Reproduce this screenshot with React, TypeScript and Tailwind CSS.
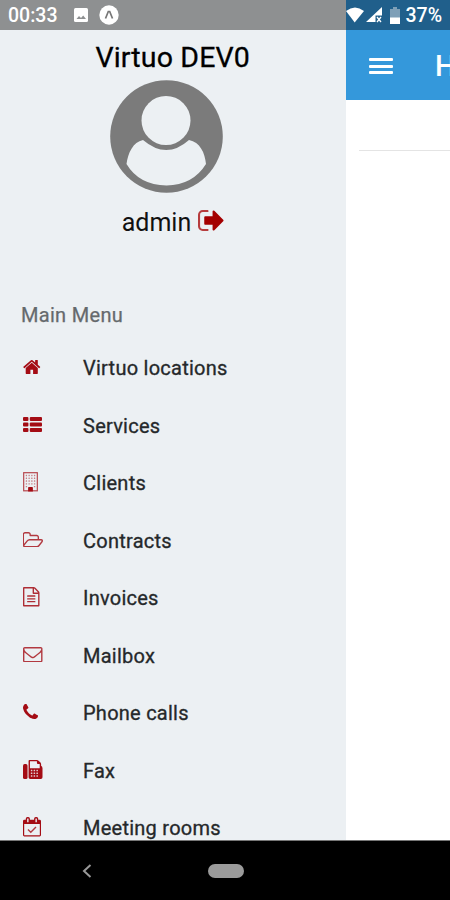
import type { ReactNode } from "react";

type MenuItem = { label: string; icon: ReactNode };

const HomeIcon = () => (
  <svg className="h-[14px] w-[17.5px]" viewBox="64 253 1664 1283" preserveAspectRatio="none" fill="currentColor">
    <path d="M1472 992v480q0 26-19 45t-45 19h-384v-384h-256v384h-384q-26 0-45-19t-19-45v-480q0-1 .5-3t.5-3l575-474 575 474q1 2 1 6zm223-69l-62 74q-8 9-21 11h-3q-13 0-21-7l-692-577-692 577q-12 8-24 7-13-2-21-11l-62-74q-8-10-7-23.5t11-21.5l719-599q32-26 76-26t76 26l244 204v-195q0-14 9-23t23-9h192q14 0 23 9t9 23v408l219 182q10 8 11 21.5t-7 23.5z" />
  </svg>
);

const ListIcon = () => (
  <svg className="h-[15px] w-[19px]" viewBox="0 0 1792 1408" preserveAspectRatio="none" fill="currentColor">
    {[0, 512, 1024].map((y) => (
      <g key={y}>
        <rect x="0" y={y} width="512" height="384" rx="96" />
        <rect x="640" y={y} width="1152" height="384" rx="96" />
      </g>
    ))}
  </svg>
);

const BuildingIcon = () => (
  <svg className="h-[19.5px] w-[15px]" viewBox="0 0 1408 1792" preserveAspectRatio="none">
    <rect x="64" y="64" width="1280" height="1664" fill="none" stroke="currentColor" strokeWidth="110" opacity="0.75" />
    <g fill="currentColor">
      {[256, 512, 768, 1024].map((y) =>
        [256, 512, 768, 1024].map((x) => (
          <rect key={`${x}-${y}`} x={x} y={y} width="128" height="128" rx="32" opacity="0.5" />
        )),
      )}
      <rect x="256" y="1280" width="128" height="128" rx="32" opacity="0.5" />
      <rect x="1024" y="1280" width="128" height="128" rx="32" opacity="0.5" />
      <path d="M480 1792v-352q0-64 64-64h320q64 0 64 64v352z" />
    </g>
  </svg>
);

const FolderIcon = () => (
  <svg className="h-[15.5px] w-[20px] opacity-80" viewBox="96 128 1877 1408" preserveAspectRatio="none" fill="currentColor">
    <path d="M1845 931q0-35-53-35h-1088q-40 0-85.5 21.5t-71.5 52.5l-294 363q-18 24-18 40 0 35 53 35h1088q40 0 86-22t71-53l294-363q18-22 18-39zm-1141-163h768v-160q0-40-28-68t-68-28h-576q-40 0-68-28t-28-68v-64q0-40-28-68t-68-28h-320q-40 0-68 28t-28 68v853l256-315q44-53 116-87.5t140-34.5zm1269 163q0 62-46 120l-295 363q-43 53-116 87.5t-140 34.5h-1088q-92 0-158-66t-66-158v-960q0-92 66-158t158-66h320q92 0 158 66t66 158v32h544q92 0 158 66t66 158v160h192q54 0 99 24.5t67 70.5q15 32 15 68z" />
  </svg>
);

const FileIcon = () => (
  <svg className="h-[19.5px] w-[16.5px] opacity-85" viewBox="128 0 1536 1792" preserveAspectRatio="none" fill="currentColor">
    <path d="M1596 380q28 28 48 76t20 88v1152q0 40-28 68t-68 28h-1344q-40 0-68-28t-28-68v-1600q0-40 28-68t68-28h896q40 0 88 20t76 48zm-444-244v376h376q-10-29-22-41l-313-313q-12-12-41-22zm384 1528v-1024h-416q-40 0-68-28t-28-68v-416h-768v1536h1280z" />
    <rect x="512" y="768" width="768" height="128" rx="32" />
    <rect x="512" y="1024" width="768" height="128" rx="32" />
    <rect x="512" y="1280" width="768" height="128" rx="32" />
  </svg>
);

const MailIcon = () => (
  <svg className="h-[15.5px] w-[19.5px] opacity-80" viewBox="0 256 1792 1408" preserveAspectRatio="none" fill="currentColor">
    <path d="M1664 1504v-768q-32 36-69 66-268 206-426 338-51 43-83 67t-86.5 48.5-102.5 24.5h-2q-48 0-102.5-24.5t-86.5-48.5-83-67q-158-132-426-338-37-30-69-66v768q0 13 9.5 22.5t22.5 9.5h1472q13 0 22.5-9.5t9.5-22.5zm0-1051v-24.5l-.5-13-3-12.5-5.5-9-9-7.5-14-2.5h-1472q-13 0-22.5 9.5t-9.5 22.5q0 168 147 284 193 152 401 317 6 5 35 29.5t46 37.5 44.5 31.5 50.5 27.5 43 9h2q20 0 43-9t50.5-27.5 44.5-31.5 46-37.5 35-29.5q208-165 401-317 54-43 100.5-115.5t46.5-131.5zm128-37v1088q0 66-47 113t-113 47h-1472q-66 0-113-47t-47-113v-1088q0-66 47-113t113-47h1472q66 0 113 47t47 113z" />
  </svg>
);

const PhoneIcon = () => (
  <svg className="-mt-px h-[15px] w-[15px]" viewBox="192 128 1408 1408" fill="currentColor">
    <path d="M1600 1240q0 27-10 70.5t-21 68.5q-21 50-122 106-94 51-186 51-27 0-53-3.5t-57.5-12.5-47-14.5-55.5-20.5-49-18q-98-35-175-83-127-79-264-216t-216-264q-48-77-83-175-3-9-18-49t-20.5-55.5-14.5-47-12.5-57.5-3.5-53q0-92 51-186 56-101 106-122 25-11 68.5-21t70.5-10q14 0 21 3 18 6 53 76 11 19 30 54t35 63.5 31 53.5q3 4 17.5 25t21.5 35.5 7 28.5q0 20-28.5 50t-62 55-62 53-28.5 46q0 9 5 22.5t8.5 20.5 14 24 11.5 19q76 137 174 235t235 174q2 1 19 11.5t24 14 20.5 8.5 22.5 5q18 0 46-28.5t53-62 55-62 50-28.5q14 0 28.5 7t35.5 21.5 25 17.5q25 15 53.5 31t63.5 35 54 30q70 35 76 53 3 7 3 21z" />
  </svg>
);

const FaxIcon = () => (
  <svg className="h-[19px] w-[19.5px]" viewBox="0 0 1792 1792" preserveAspectRatio="none">
    <rect x="0" y="384" width="416" height="1408" rx="150" fill="currentColor" />
    <path
      fill="currentColor"
      fillRule="evenodd"
      d="M512 1632V96Q512 0 608 0h672q90 0 150 60l152 152q82 82 82 172v160q128 70 128 224v864q0 160-160 160H672q-160 0-160-160zM640 128v640h896V384h-160q-96 0-96-96V128z"
    />
    <g fill="#ecf0f3" opacity="0.85">
      {[928, 1184, 1440].map((y) =>
        [720, 976, 1232].map((x) => <rect key={`${x}-${y}`} x={x} y={y} width="140" height="140" rx="30" />),
      )}
    </g>
  </svg>
);

const CalendarIcon = () => (
  <svg className="h-[19.5px] w-[18px]" viewBox="0 0 1664 1792" preserveAspectRatio="none">
    <path
      fill="currentColor"
      fillRule="evenodd"
      d="M128 256h128v-96Q256 0 416 0h64q160 0 160 160v96h384v-96Q1024 0 1184 0h64q160 0 160 160v96h128q128 0 128 128v1280q0 128-128 128H128Q0 1792 0 1664V384Q0 256 128 256zM110 640v1044h1444V640zM384 160v288q0 32 32 32h64q32 0 32-32V160q0-32-32-32h-64q-32 0-32 32zM1152 160v288q0 32 32 32h64q32 0 32-32V160q0-32-32-32h-64q-32 0-32 32z"
    />
    <path d="M460 1150l260 250 480-490" fill="none" stroke="currentColor" strokeWidth="128" opacity="0.8" />
  </svg>
);

const SignOutIcon = () => (
  <svg className="-mt-[6px] ml-[7px] h-[21px] w-[25.5px]" viewBox="64 256 1568 1280" preserveAspectRatio="none" fill="currentColor">
    <path opacity="0.75" d="M704 1440q0 4 1 20t.5 26.5-3 23.5-10 19.5-20.5 6.5h-320q-119 0-203.5-84.5t-84.5-203.5v-704q0-119 84.5-203.5t203.5-84.5h320q13 0 22.5 9.5t9.5 22.5q0 4 1 20t.5 26.5-3 23.5-10 19.5-20.5 6.5h-320q-66 0-113 47t-47 113v704q0 66 47 113t113 47h312l11.5 1 11.5 3 8 5.5 7 9 2 13.5z" />
    <path d="M1632 896q0 26-19 45l-544 544q-19 19-45 19t-45-19-19-45v-288h-448q-26 0-45-19t-19-45v-384q0-26 19-45t45-19h448v-288q0-26 19-45t45-19 45 19l544 544q19 19 19 45z" />
  </svg>
);

const Avatar = () => (
  <svg className="mt-[5px] mr-[12px] h-[113px] w-[113px]" viewBox="0 0 113 113">
    <circle cx="56.5" cy="56.5" r="56.3" fill="#7b7b7b" />
    <circle cx="56" cy="40.5" r="24.5" fill="#ecf0f3" />
    <path d="M33 60Q56.500 80 79 60C90 62 95 73 96 84Q83 105 56.500 105.500Q29 105 16.500 84C18 73 23 62 33 60Z" fill="#ecf0f3" />
  </svg>
);

const menu: MenuItem[] = [
  { label: "Virtuo locations", icon: <HomeIcon /> },
  { label: "Services", icon: <ListIcon /> },
  { label: "Clients", icon: <BuildingIcon /> },
  { label: "Contracts", icon: <FolderIcon /> },
  { label: "Invoices", icon: <FileIcon /> },
  { label: "Mailbox", icon: <MailIcon /> },
  { label: "Phone calls", icon: <PhoneIcon /> },
  { label: "Fax", icon: <FaxIcon /> },
  { label: "Meeting rooms", icon: <CalendarIcon /> },
];

function Drawer() {
  return (
    <aside className="flex h-[841px] w-[345.500px] shrink-0 flex-col overflow-hidden bg-[#ecf0f3]">
      <div className="flex h-[30px] shrink-0 items-center bg-[#8e9091] pl-2 text-white">
        <span className="w-[65.500px] pt-[2px] text-[19.500px] leading-none font-medium">00:33</span>
        <svg className="h-[14px] w-[14px]" viewBox="0 0 14 14">
          <rect width="14" height="14" rx="1.500" fill="#fff" />
          <path d="M2.500 11l2.500-3 2 2 2.200-2.500L12 11z" fill="#8e9091" />
        </svg>
        <svg className="ml-[11px] h-5 w-5" viewBox="0 0 20 20">
          <circle cx="10" cy="10" r="9.700" fill="#fff" />
          <path d="M6.500 13.500L9.300 6.500h1.400l2.800 7" fill="none" stroke="#777" strokeWidth="1.700" />
        </svg>
      </div>
      <div className="flex shrink-0 flex-col items-center pt-3">
        <h1 className="h-[33px] text-[28.500px] leading-[32px] font-normal tracking-[0.150px] text-black [-webkit-text-stroke:0.3px_#000]">
          Virtuo DEV0
        </h1>
        <Avatar />
        <div className="mt-[14px] flex h-8 items-center text-[#a40000]">
          <span className="text-[25px] leading-8 text-[#111]">admin</span>
          <SignOutIcon />
        </div>
      </div>
      <h2 className="mt-[64px] h-[24px] shrink-0 pl-[21px] text-[20px] leading-6 font-normal tracking-[0.3px] text-[#65696c] [-webkit-text-stroke:0.25px_#65696c]">
        Main Menu
      </h2>
      <nav className="mt-[12px] shrink-0">
        {menu.map((item) => (
          <a key={item.label} className="flex h-[57.500px] items-center pl-[23px]">
            <span className="w-[60px] pb-[2px] text-[#a40c14]">{item.icon}</span>
            <span className="pt-px text-[20px] tracking-[0.250px] text-[#25282a] [-webkit-text-stroke:0.3px_#25282a]">
              {item.label}
            </span>
          </a>
        ))}
      </nav>
    </aside>
  );
}

function Page() {
  return (
    <main className="flex min-w-0 flex-1 flex-col overflow-hidden bg-white">
      <div className="flex h-[30px] shrink-0 items-center bg-[#205f8b] text-white">
        <svg className="h-[16px] w-[18px]" viewBox="0 0 18 16">
          <path d="M0 4Q9-3 18 4L8.700 15.500z" fill="#fff" />
        </svg>
        <svg className="ml-[2.500px] h-[16px] w-[16px]" viewBox="0 0 16 16">
          <path d="M16 0v8.500H9.500V15H0z" fill="#fff" />
          <path d="M11 10l4 5M15 10l-4 5" stroke="#fff" strokeWidth="1.300" />
        </svg>
        <svg className="ml-[8px] h-[17px] w-[10px]" viewBox="0 0 10 17">
          <path d="M3 0h4v2h3v9H0V2h3z" fill="#7e9fb7" />
          <path d="M0 10.500h10V17H0z" fill="#fff" />
        </svg>
        <span className="ml-[5.500px] pt-[2px] text-[19.500px] leading-none font-medium">37%</span>
      </div>
      <header className="flex h-[70px] shrink-0 items-center overflow-hidden bg-[#3498db] pl-[23px] text-white">
        <div className="mt-[2px] flex w-[24px] shrink-0 flex-col gap-[3.500px]">
          <i className="h-[3px] rounded-[1px] bg-white" />
          <i className="h-[3px] rounded-[1px] bg-white" />
          <i className="h-[3px] rounded-[1px] bg-white" />
        </div>
        <span className="mt-[3px] ml-[42.500px] text-[29px] leading-none font-medium whitespace-nowrap">Home</span>
      </header>
      <div className="ml-[13px] h-[51px] shrink-0 border-b border-[#e4e4e4]" />
    </main>
  );
}

export default function App() {
  return (
    <div className="flex h-[900px] w-[450px] flex-col overflow-hidden bg-white font-['Roboto','Liberation_Sans',sans-serif]">
      <div className="flex h-[840px] overflow-hidden">
        <Drawer />
        <Page />
      </div>
      <div className="flex h-[60px] items-center border-t border-[#777] bg-black pl-[82px]">
        <svg className="h-[14px] w-[10px]" viewBox="0 0 10 14">
          <path d="M8.500 1L2 7l6.500 6" fill="none" stroke="#999" strokeWidth="2" />
        </svg>
        <div className="ml-[115.500px] h-[14px] w-[36px] rounded-full bg-[#9b9b9b]" />
      </div>
    </div>
  );
}
